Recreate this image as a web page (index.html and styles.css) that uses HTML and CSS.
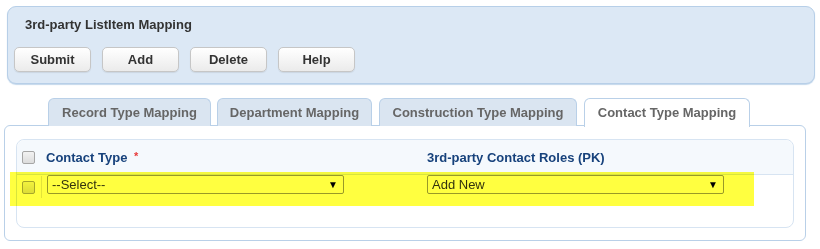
FILE: index.html
```html
<!DOCTYPE html>
<html lang="en">
<head>
  <meta charset="UTF-8" />
  <title>3rd-party ListItem Mapping</title>
  <link rel="stylesheet" href="styles.css">
</head>
<body>
  <div class="page">
    <div class="toolbar">
      <h1>3rd-party ListItem Mapping</h1>
      <div class="buttons">
        <button>Submit</button>
        <button>Add</button>
        <button>Delete</button>
        <button>Help</button>
      </div>
    </div>

    <div class="tabs">
      <div class="tab">Record Type Mapping</div>
      <div class="tab">Department Mapping</div>
      <div class="tab">Construction Type Mapping</div>
      <div class="tab active">Contact Type Mapping</div>
    </div>

    <div class="tab-body">
      <div class="grid">
        <div class="row head">
          <div class="chk"><input type="checkbox" /></div>
          <div class="col first">Contact Type <span class="req">*</span></div>
          <div class="col">3rd-party Contact Roles (PK)</div>
        </div>
        <div class="row item">
          <div class="chk"><input type="checkbox" /></div>
          <div class="col first"><div class="select">--Select--<span class="arrow">▼</span></div></div>
          <div class="col"><div class="select">Add New<span class="arrow">▼</span></div></div>
        </div>
        <div class="highlight"></div>
      </div>
    </div>
  </div>
</body>
</html>
```

FILE: styles.css
```css
* {
  box-sizing: border-box;
}

body {
  margin: 0;
  background: #fff;
  font-family: "Liberation Sans", Arial, sans-serif;
  font-size: 13px;
  color: #333;
}

.page {
  padding: 6px 15px 0 4px;
  width: 820px;
}

.toolbar {
  margin: 0 -10px 0 3px;
  padding: 10px 6px 11px 6px;
  background: #dce8f5;
  border: 1px solid #b7cfe8;
  border-radius: 9px;
  box-shadow: 0 1px 1px #c4d8ec;
}

.toolbar h1 {
  margin: 0 0 15px 11px;
  font-size: 13px;
  line-height: 15px;
  font-weight: bold;
  color: #333;
}

.buttons {
  display: flex;
  gap: 11px;
}

.buttons button {
  width: 77px;
  height: 25px;
  padding: 0;
  font-family: inherit;
  font-size: 13px;
  font-weight: bold;
  color: #333;
  background: linear-gradient(#ffffff, #ebebeb);
  border: 1px solid #c6c6c6;
  border-radius: 5px;
  box-shadow: 0 1px 1px rgba(0,0,0,0.08);
}

.tabs {
  display: flex;
  gap: 7px;
  margin-top: 14px;
  padding-left: 44px;
  position: relative;
  z-index: 1;
}

.tab {
  height: 28px;
  padding-top: 6px;
  text-align: center;
  font-weight: bold;
  color: #666;
  background: #dae5f1;
  border: 1px solid #b9d0e8;
  border-bottom: none;
  border-radius: 6px 6px 0 0;
  white-space: nowrap;
}

.tab.active {
  background: #fff;
  height: 29px;
  margin-bottom: -1px;
}

.tab:nth-child(1) { width: 163px; margin-right: -1px; }
.tab:nth-child(2) { width: 155px; }
.tab:nth-child(3) { width: 198px; }
.tab:nth-child(4) { width: 166px; }

.tab-body {
  margin-top: -1px;
  padding: 13px 11px 12px;
  border: 1px solid #b9d0e8;
  border-radius: 6px;
  width: 802px;
}

.grid {
  position: relative;
  height: 89px;
  border: 1px solid #d7e4f2;
  border-radius: 8px;
}

.row {
  display: flex;
  align-items: center;
}

.row.head {
  height: 35px;
  background: #f5f9fd;
  border-bottom: 1px solid #d7e4f2;
  border-radius: 8px 8px 0 0;
  font-weight: bold;
  color: #17427c;
}

.row.item {
  height: 31px;
  align-items: flex-start;
}

.chk {
  width: 25px;
  flex-shrink: 0;
  align-self: stretch;
  display: flex;
  align-items: center;
  padding-left: 5px;
}

.row.item .chk {
  border-right: 1px solid #e3e3e3;
  height: 22px;
  margin-top: 1px;
}

.chk input {
  appearance: none;
  margin: 0;
  width: 13px;
  height: 13px;
  border: 1px solid #a6a6a6;
  border-radius: 2px;
  background: linear-gradient(#f2f2f2, #dcdcdc);
}

.col {
  flex: 1;
}

.col.first {
  flex: 0 0 385px;
  padding-left: 4px;
}

.row.item .col.first {
  padding-left: 5px;
}

.req {
  color: #e83a3a;
  font-size: 11px;
  vertical-align: 2px;
  margin-left: 3px;
}

.select {
  width: 297px;
  height: 19px;
  padding: 1px 0 0 4px;
  border: 1px solid #999;
  border-radius: 2px;
  background: #fff;
  color: #333;
  line-height: 16px;
  position: relative;
}

.arrow {
  position: absolute;
  right: 5px;
  top: 1px;
  font-size: 10px;
  color: #000;
}

.highlight {
  position: absolute;
  left: -7px;
  top: 32px;
  width: 744px;
  height: 34px;
  background: #ffff40;
  mix-blend-mode: multiply;
}
```
